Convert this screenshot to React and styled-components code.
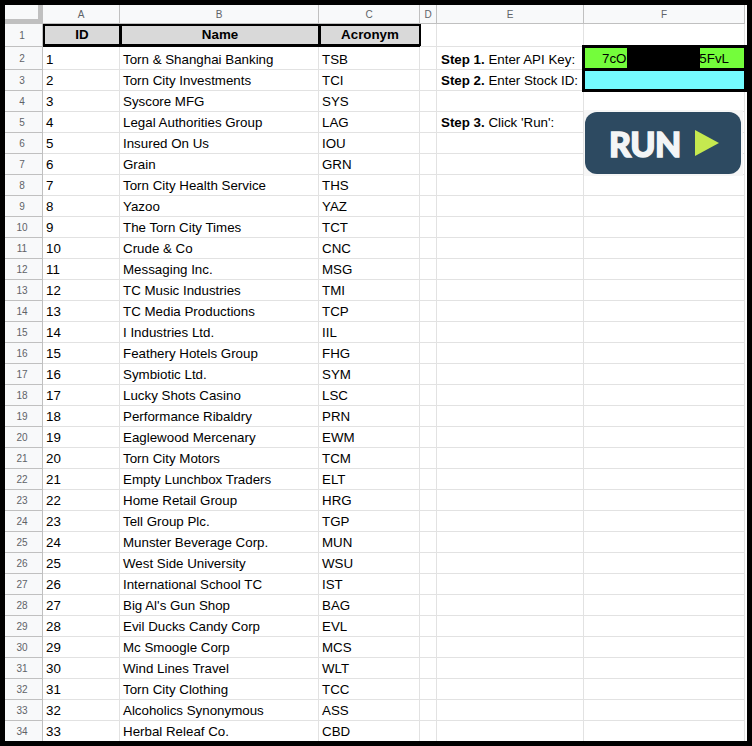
import React from 'react'
import styled, { createGlobalStyle } from 'styled-components'

const GlobalStyle = createGlobalStyle`
    html, body {
        margin: 0;
        padding: 0;
        background: #000;
    }
    body {
        font-family: "Liberation Sans", Arial, sans-serif;
    }
`

const Page = styled.div`
    width: 752px;
    height: 746px;
    box-sizing: border-box;
    padding: 5px;
    overflow: hidden;
    background: #000;
`

const Sheet = styled.div`
    width: 742px;
    height: 736px;
    overflow: hidden;
    background: #fff;
    display: grid;
    grid-template-columns: 38px 77px 199px 101px 17px 147px 161px 2px;
    grid-template-rows: 19px 23px 23px repeat(32, 21px);
`

const Corner = styled.div`
    grid-column: 1;
    grid-row: 1;
    box-sizing: border-box;
    background: #f8f9fa;
    border-right: 5px solid #c0c0c0;
    border-bottom: 5px solid #c0c0c0;
`

const ColHead = styled.div`
    grid-row: 1;
    grid-column: ${(p) => p.$col};
    box-sizing: border-box;
    display: flex;
    align-items: center;
    justify-content: center;
    background: #f8f9fa;
    border-right: 1px solid #c0c0c0;
    border-bottom: 1px solid #c0c0c0;
    color: #5f6368;
    font-size: 10px;
`

const RowHead = styled.div`
    grid-column: 1;
    grid-row: ${(p) => p.$row};
    box-sizing: border-box;
    display: flex;
    align-items: center;
    justify-content: center;
    padding-right: 3px;
    background: #f8f9fa;
    border-right: 1px solid #c0c0c0;
    border-bottom: 1px solid #c0c0c0;
    color: #5f6368;
    font-size: 10px;
`

const Cell = styled.div`
    grid-row: ${(p) => p.$row};
    grid-column: ${(p) => p.$col};
    box-sizing: border-box;
    display: flex;
    align-items: flex-end;
    padding: 0 3px 1px 3px;
    border-right: 1px solid #e2e2e2;
    border-bottom: 1px solid #e2e2e2;
    color: #000;
    font-size: 13.33px;
    line-height: 16px;
    white-space: nowrap;
    overflow: hidden;
`

const TitleCell = styled.div`
    grid-row: 2;
    grid-column: ${(p) => p.$col};
    box-sizing: border-box;
    display: flex;
    align-items: center;
    justify-content: center;
    margin-right: -1px;
    padding-bottom: 1px;
    background: #d9d9d9;
    border: 2px solid #000;
    border-bottom-width: 3px;
    color: #000;
    font-size: 13.33px;
    font-weight: 700;
`

const Step = styled.span`
    padding-left: 1px;
    b {
        font-weight: 700;
    }
`

const KeyBox = styled.div`
    grid-column: 7 / span 2;
    grid-row: 3 / span 2;
    margin: -2px 0 -1px -2px;
    box-sizing: border-box;
    display: grid;
    grid-template-rows: 20px 18px;
    row-gap: 3px;
    padding: 3px;
    background: #000;
    z-index: 2;
`

const KeyValue = styled.div`
    position: relative;
    display: flex;
    justify-content: space-between;
    align-items: center;
    padding: 0 15px 0 17px;
    background: #74fd3b;
    color: #000;
    font-size: 13.33px;
    overflow: hidden;
`

const Redaction = styled.div`
    position: absolute;
    left: 42px;
    top: 0;
    bottom: 0;
    width: 73px;
    background: #000;
`

const StockValue = styled.div`
    background: #75fbfe;
`

const RunButton = styled.div`
    grid-column: 7;
    grid-row: 6 / span 3;
    margin: -2px 2px -1px 0;
    padding: 2px 2px 2px 1px;
    background: #f6f6f6;
    z-index: 2;
    display: flex;
`

const RunFace = styled.div`
    flex: 1;
    display: flex;
    align-items: center;
    gap: 14px;
    padding-left: 24px;
    border-radius: 12px;
    background: #2d4a61;
    svg {
        display: block;
    }
`

const RunLabel = styled.span`
    padding-top: 2px;
    font-family: Lato, "Open Sans", sans-serif;
    font-size: 34px;
    font-weight: 900;
    line-height: 1;
    letter-spacing: -0.6px;
    color: #f3f5f6;
    -webkit-text-stroke: 1.4px #f3f5f6;
`

const companies = [
    ['Torn & Shanghai Banking', 'TSB'],
    ['Torn City Investments', 'TCI'],
    ['Syscore MFG', 'SYS'],
    ['Legal Authorities Group', 'LAG'],
    ['Insured On Us', 'IOU'],
    ['Grain', 'GRN'],
    ['Torn City Health Service', 'THS'],
    ['Yazoo', 'YAZ'],
    ['The Torn City Times', 'TCT'],
    ['Crude & Co', 'CNC'],
    ['Messaging Inc.', 'MSG'],
    ['TC Music Industries', 'TMI'],
    ['TC Media Productions', 'TCP'],
    ['I Industries Ltd.', 'IIL'],
    ['Feathery Hotels Group', 'FHG'],
    ['Symbiotic Ltd.', 'SYM'],
    ['Lucky Shots Casino', 'LSC'],
    ['Performance Ribaldry', 'PRN'],
    ['Eaglewood Mercenary', 'EWM'],
    ['Torn City Motors', 'TCM'],
    ['Empty Lunchbox Traders', 'ELT'],
    ['Home Retail Group', 'HRG'],
    ['Tell Group Plc.', 'TGP'],
    ['Munster Beverage Corp.', 'MUN'],
    ['West Side University', 'WSU'],
    ['International School TC', 'IST'],
    ["Big Al's Gun Shop", 'BAG'],
    ['Evil Ducks Candy Corp', 'EVL'],
    ['Mc Smoogle Corp', 'MCS'],
    ['Wind Lines Travel', 'WLT'],
    ['Torn City Clothing', 'TCC'],
    ['Alcoholics Synonymous', 'ASS'],
    ['Herbal Releaf Co.', 'CBD'],
]

const steps = {
    2: ['Step 1.', ' Enter API Key:'],
    3: ['Step 2.', ' Enter Stock ID:'],
    5: ['Step 3.', " Click 'Run':"],
}

const columns = ['A', 'B', 'C', 'D', 'E', 'F']

const App = () => {
    return (
        <Page>
            <GlobalStyle />
            <Sheet>
                <Corner />
                {columns.map((c, i) => <ColHead key={c} $col={i + 2}>{c}</ColHead>)}

                <RowHead $row={2}>1</RowHead>
                <TitleCell $col={2}>ID</TitleCell>
                <TitleCell $col={3}>Name</TitleCell>
                <TitleCell $col={4}>Acronym</TitleCell>
                <Cell $row={2} $col={5} />
                <Cell $row={2} $col={6} />
                <Cell $row={2} $col={7} />

                {companies.map(([name, code], i) => {
                    const row = i + 2
                    const gridRow = row + 1
                    const step = steps[row]
                    return (
                        <React.Fragment key={code}>
                            <RowHead $row={gridRow}>{row}</RowHead>
                            <Cell $row={gridRow} $col={2}>{i + 1}</Cell>
                            <Cell $row={gridRow} $col={3}>{name}</Cell>
                            <Cell $row={gridRow} $col={4}>{code}</Cell>
                            <Cell $row={gridRow} $col={5} />
                            <Cell $row={gridRow} $col={6}>
                                {step && <Step><b>{step[0]}</b>{step[1]}</Step>}
                            </Cell>
                            <Cell $row={gridRow} $col={7} />
                        </React.Fragment>
                    )
                })}

                <KeyBox>
                    <KeyValue>
                        <span>7cO:</span>
                        <span>5FvL</span>
                        <Redaction />
                    </KeyValue>
                    <StockValue />
                </KeyBox>

                <RunButton>
                    <RunFace>
                        <RunLabel>RUN</RunLabel>
                        <svg width="24" height="26" viewBox="0 0 24 26">
                            <path d="M0 0 L24 13 L0 26 Z" fill="#c5e94f" />
                        </svg>
                    </RunFace>
                </RunButton>
            </Sheet>
        </Page>
    )
}

export default App
